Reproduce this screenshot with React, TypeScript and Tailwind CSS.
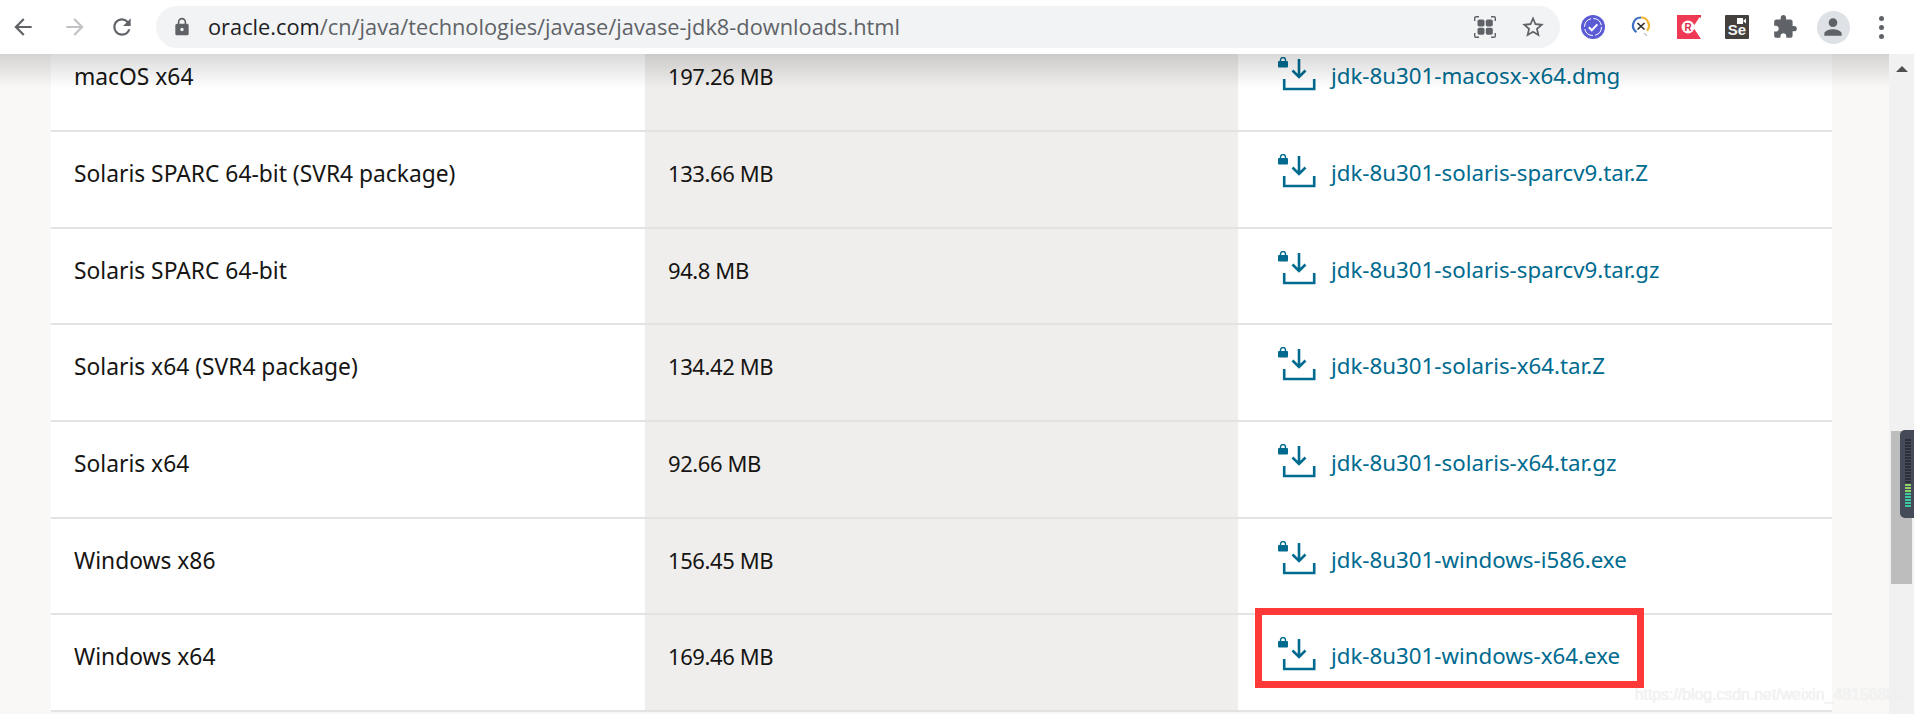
const rows = [
  ['macOS x64', '197.26 MB', 'jdk-8u301-macosx-x64.dmg'],
  ['Solaris SPARC 64-bit (SVR4 package)', '133.66 MB', 'jdk-8u301-solaris-sparcv9.tar.Z'],
  ['Solaris SPARC 64-bit', '94.8 MB', 'jdk-8u301-solaris-sparcv9.tar.gz'],
  ['Solaris x64 (SVR4 package)', '134.42 MB', 'jdk-8u301-solaris-x64.tar.Z'],
  ['Solaris x64', '92.66 MB', 'jdk-8u301-solaris-x64.tar.gz'],
  ['Windows x86', '156.45 MB', 'jdk-8u301-windows-i586.exe'],
  ['Windows x64', '169.46 MB', 'jdk-8u301-windows-x64.exe'],
]

const MdIcon = ({ d, size, color }: { d: string; size: number; color: string }) => (
  <svg width={size} height={size} viewBox="0 0 24 24" fill={color}>
    <path d={d} />
  </svg>
)

const DownloadIcon = () => (
  <svg width="38" height="34" viewBox="0 0 38 34" fill="none" className="shrink-0">
    <rect x="0" y="4" width="10" height="6.5" rx="1" fill="#006b8f" />
    <path d="M2.5 4.5V3a2.5 2.5 0 0 1 5 0v1.5" stroke="#006b8f" strokeWidth="1.4" />
    <path d="M21 2v18M14.5 13.5l6.5 6.5 6.5-6.5" stroke="#006b8f" strokeWidth="2.6" />
    <path d="M6.2 22v10h30V22" stroke="#006b8f" strokeWidth="2.6" />
  </svg>
)

const Slot = ({ children }: { children: React.ReactNode }) => (
  <div className="flex h-[48px] w-[48px] shrink-0 items-center justify-center">{children}</div>
)

const QrIcon = () => (
  <svg width="22" height="22" viewBox="0 0 22 22" fill="none">
    <path d="M.7 5V2a1.3 1.3 0 0 1 1.3-1.3h3M17 .7h3A1.3 1.3 0 0 1 21.3 2v3M21.3 17v3a1.3 1.3 0 0 1-1.3 1.3h-3M5 21.3H2A1.3 1.3 0 0 1 .7 20v-3" stroke="#5f6368" strokeWidth="1.4" />
    <rect x="3.5" y="3.5" width="7" height="7" rx="1.8" fill="#5f6368" />
    <rect x="11.8" y="3.5" width="7" height="7" rx="1.8" fill="#5f6368" />
    <rect x="3.5" y="11.8" width="7" height="7" rx="1.8" fill="#5f6368" />
    <rect x="11.8" y="11.8" width="7" height="7" rx="1.8" fill="#5f6368" />
  </svg>
)

const CheckExt = () => (
  <svg width="24" height="24" viewBox="0 0 24 24">
    <circle cx="12" cy="12" r="12" fill="#5b5bd6" />
    <circle cx="12" cy="12" r="8.5" fill="none" stroke="#fff" strokeWidth="1" strokeDasharray="11 2.4" />
    <path d="M7.8 12.2l3 3 5.6-5.8" fill="none" stroke="#fff" strokeWidth="2" />
  </svg>
)

const GaugeExt = () => (
  <svg width="20" height="24" viewBox="0 0 20 24" fill="none">
    <path d="M10 2.5a8 8 0 0 0-4.5 14.6" stroke="#3d6fc4" strokeWidth="2.2" />
    <path d="M10 2.5a8 8 0 0 1 6 13.2" stroke="#f2b632" strokeWidth="2.2" />
    <path d="M6.5 14.5l7-6.5M6.5 8l7 6.5" stroke="#2b2b2b" strokeWidth="1.6" />
    <path d="M13 18l3 3" stroke="#c3ccd6" strokeWidth="1.6" />
  </svg>
)

const RedExt = () => (
  <svg width="24" height="24" viewBox="0 0 24 24">
    <path d="M0 0h24l-8 12 8 12H0z" fill="#ef3a56" />
    <path d="M19 0h5v3z" fill="#e23049" />
    <circle cx="11" cy="12" r="6.5" fill="#fff" />
    <text x="11" y="15.5" fontSize="10" fontWeight="700" textAnchor="middle" fill="#d92c45" fontFamily="Liberation Sans, sans-serif">R</text>
  </svg>
)

const SeExt = () => (
  <div className="relative flex h-[24px] w-[24px] items-end justify-center rounded-[1px] bg-[#43403e] font-['Liberation_Sans',sans-serif] text-[15px] font-bold leading-[19px] text-[#f4f4f4]">
    Se
    <svg width="9" height="6" viewBox="0 0 9 6" className="absolute right-[3px] top-[3px]">
      <rect width="6" height="6" fill="#fff" />
      <path d="M6 3l3-2.5v5z" fill="#fff" />
    </svg>
  </div>
)

const Toolbar = () => (
  <header className="relative z-10 flex h-[54px] shrink-0 items-center bg-white">
    <div className="flex w-[46px] justify-center">
      <MdIcon size={26} color="#5f6368" d="M20 11H7.83l5.59-5.59L12 4l-8 8 8 8 1.41-1.41L7.83 13H20v-2z" />
    </div>
    <div className="flex w-[58px] justify-center">
      <MdIcon size={26} color="#c1c3c6" d="M4 11h12.17l-5.59-5.59L12 4l8 8-8 8-1.41-1.41L16.17 13H4v-2z" />
    </div>
    <div className="flex w-[36px] justify-center">
      <MdIcon size={26} color="#5f6368" d="M17.65 6.35A7.958 7.958 0 0012 4c-4.42 0-7.99 3.58-7.99 8s3.57 8 7.99 8c3.73 0 6.84-2.55 7.73-6h-2.08A5.99 5.99 0 0112 18c-3.31 0-6-2.69-6-6s2.69-6 6-6c1.66 0 3.14.69 4.22 1.78L13 11h7V4l-2.35 2.35z" />
    </div>
    <div className="ml-[16px] flex h-[42px] w-[1404px] shrink-0 items-center rounded-full bg-[#f1f3f4] pl-[16px] pr-[3px]">
      <MdIcon size={20} color="#5f6368" d="M18 8h-1V6c0-2.76-2.24-5-5-5S7 3.24 7 6v2H6c-1.1 0-2 .9-2 2v10c0 1.1.9 2 2 2h12c1.1 0 2-.9 2-2V10c0-1.1-.9-2-2-2zm-6 9c-1.1 0-2-.9-2-2s.9-2 2-2 2 .9 2 2-.9 2-2 2zm3.1-9H8.9V6c0-1.71 1.39-3.1 3.1-3.1 1.71 0 3.1 1.39 3.1 3.1v2z" />
      <div className="ml-[16px] flex-1 whitespace-nowrap font-['Open_Sans',sans-serif] text-[21.8px] text-[#5f6368]">
        <span className="text-[#202124]">oracle.com</span>/cn/java/technologies/javase/javase-jdk8-downloads.html
      </div>
      <Slot><QrIcon /></Slot>
      <Slot><MdIcon size={26} color="#5f6368" d="M22 9.24l-7.19-.62L12 2 9.19 8.63 2 9.24l5.46 4.73L5.82 21 12 17.27 18.18 21l-1.63-7.03L22 9.24zM12 15.4l-3.76 2.27 1-4.28-3.32-2.88 4.38-.38L12 6.1l1.71 4.04 4.38.38-3.32 2.88 1 4.28L12 15.4z" /></Slot>
    </div>
    <div className="ml-[9px] flex">
      <Slot><CheckExt /></Slot>
      <Slot><GaugeExt /></Slot>
      <Slot><RedExt /></Slot>
      <Slot><SeExt /></Slot>
      <Slot><MdIcon size={26} color="#5f6368" d="M20.5 11H19V7c0-1.1-.9-2-2-2h-4V3.5C13 2.12 11.88 1 10.5 1S8 2.12 8 3.5V5H4c-1.1 0-1.99.9-1.99 2v3.8H3.5c1.49 0 2.7 1.21 2.7 2.7s-1.21 2.7-2.7 2.7H2V20c0 1.1.9 2 2 2h3.8v-1.5c0-1.49 1.21-2.7 2.7-2.7 1.49 0 2.7 1.21 2.7 2.7V22H17c1.1 0 2-.9 2-2v-4h1.5c1.38 0 2.5-1.12 2.5-2.5S21.88 11 20.5 11z" /></Slot>
      <Slot>
        <div className="flex h-[33px] w-[33px] items-center justify-center rounded-full bg-[#dee1e6]">
          <MdIcon size={26} color="#5f6368" d="M12 12c2.21 0 4-1.79 4-4s-1.79-4-4-4-4 1.79-4 4 1.79 4 4 4zm0 2c-2.67 0-8 1.34-8 4v2h16v-2c0-2.66-5.33-4-8-4z" />
        </div>
      </Slot>
      <Slot>
        <div className="flex flex-col gap-[4px]">
          <span className="h-[5px] w-[5px] rounded-full bg-[#5f6368]" />
          <span className="h-[5px] w-[5px] rounded-full bg-[#5f6368]" />
          <span className="h-[5px] w-[5px] rounded-full bg-[#5f6368]" />
        </div>
      </Slot>
    </div>
  </header>
)

const Scrollbar = () => (
  <aside className="relative flex w-[25px] shrink-0 flex-col bg-[#f1f1f1]">
    <div className="mx-auto mt-[12px] h-0 w-0 border-x-[6px] border-b-[6px] border-x-transparent border-b-[#505050]" />
    <div className="ml-[2px] mt-[359px] h-[153px] w-[21px] bg-[#bdbdbd]" />
    {/* floating meter widget from some desktop app */}
    <div className="absolute left-[11px] top-[376px] flex h-[88px] w-[14px] flex-col gap-[1px] rounded-l-[5px] bg-[#454a58] py-[9px] pl-[5px]">
      {Array.from({ length: 23 }).map((_, i) => (
        <span
          key={i}
          className={
            i < 15
              ? 'h-[2px] w-[6px] bg-[#2c2f38]'
              : i < 18
                ? 'h-[2px] w-[6px] bg-[#8fd06a]'
                : 'h-[2px] w-[6px] bg-[#3fc5a0]'
          }
        />
      ))}
    </div>
  </aside>
)

const App = () => {
  return (
    <div className="relative flex h-screen w-full flex-col overflow-hidden bg-[#f9f8f6] font-['Noto_Sans',sans-serif]">
      <Toolbar />
      <div className="flex min-h-0 flex-1">
        <main className="relative flex-1 overflow-hidden pl-[51px] pr-[57px]">
          <div className="-mt-[18.67px] bg-white">
            {rows.map((row) => (
              <div key={row[2]} className="grid h-[96.67px] grid-cols-[594px_593px_594px] border-b-2 border-[#e4e3e1] leading-[30px]">
                <div className="pl-[23px] pt-[27px] text-[22.8px] text-[#161513]">{row[0]}</div>
                <div className="bg-[#efeeec] pl-[23px] pt-[26px] text-[22px] tracking-[-0.4px] text-[#161513]">{row[1]}</div>
                <div className="flex items-start pl-[40px] pt-[22px]">
                  <DownloadIcon />
                  <span className="ml-[15px] pt-[4px] text-[22.3px] text-[#006b8f]">{row[2]}</span>
                </div>
              </div>
            ))}
          </div>
          <div className="absolute left-0 right-0 top-0 h-[34px] bg-gradient-to-b from-black/15 to-transparent" />
        </main>
        <Scrollbar />
      </div>
      {/* red highlight box + watermark sit on top of the page */}
      <div className="absolute left-[1255px] top-[608px] h-[80px] w-[389px] border-[7px] border-[#ff3838]" />
      <div className="absolute right-[10px] top-[683px] whitespace-nowrap font-['Liberation_Sans',sans-serif] text-[16px] leading-[24px] tracking-[-0.08px] text-[#f4f4f4] [text-shadow:0_0_1px_#e2e2e2]">
        https://blog.csdn.net/weixin_48156889
      </div>
    </div>
  )
}

export default App
